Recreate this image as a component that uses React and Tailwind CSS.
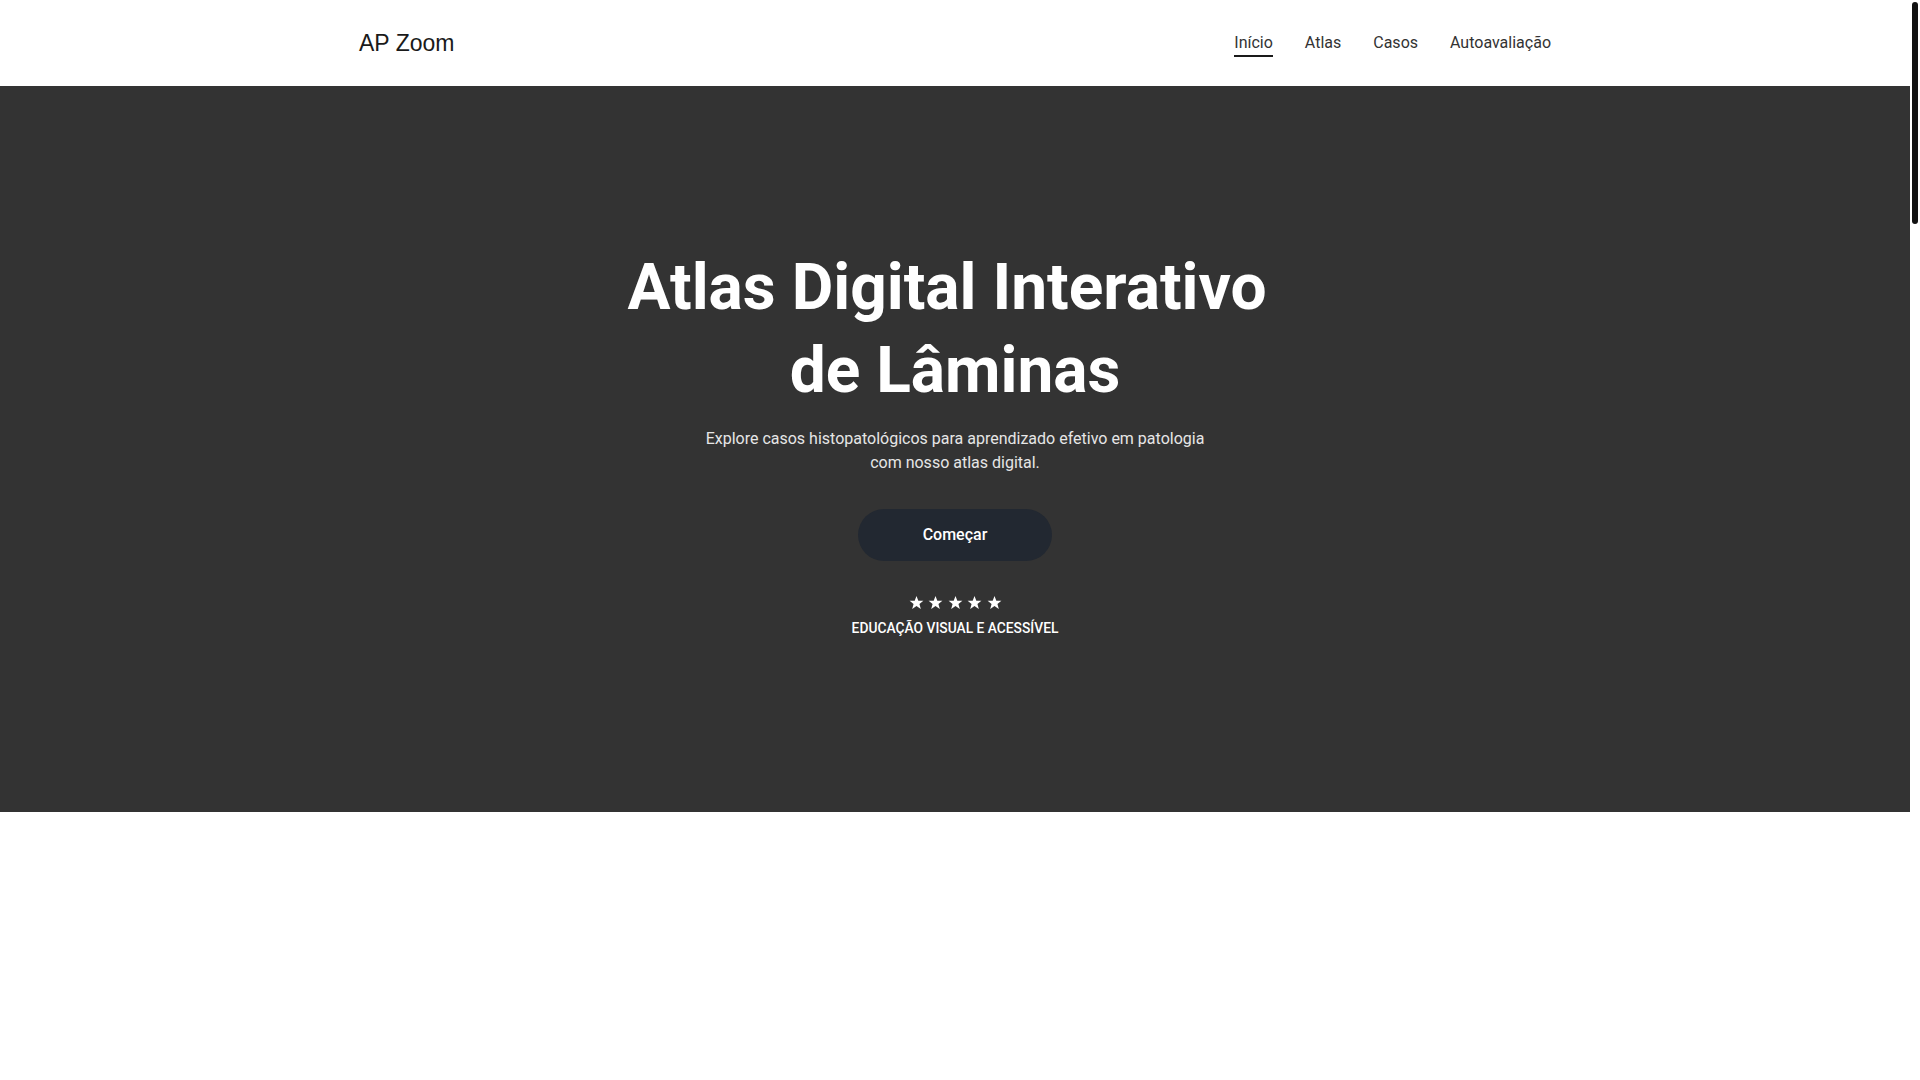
const links = [
  { label: "Início", active: true },
  { label: "Atlas" },
  { label: "Casos" },
  { label: "Autoavaliação" },
];

function Stars() {
  return (
    <div className="flex items-center justify-center gap-[4.5px]">
      {[0, 1, 2, 3, 4].map((i) => (
        <svg key={i} width="15" height="15" viewBox="0 0 24 24" className="fill-white">
          <polygon points="12,1.5 14.9,9 23,9.3 16.7,14.3 18.9,22.2 12,17.6 5.1,22.2 7.3,14.3 1,9.3 9.1,9" />
        </svg>
      ))}
    </div>
  );
}

export default function App() {
  return (
    <div className="min-h-screen flex bg-white font-['Roboto',sans-serif]">
      <div className="flex-1 min-w-0">
        {/* header */}
        <header className="h-[86px] bg-white">
          <div className="max-w-[1192px] mx-auto h-full flex items-center justify-between">
            <a className="text-[23px] leading-8 text-[#1a1a1a] font-['Liberation_Sans',Arial,sans-serif]">
              AP Zoom
            </a>
            <nav className="flex items-center gap-8 pt-[2px]">
              {links.map((l) => (
                <a
                  key={l.label}
                  className={
                    "text-base leading-6 text-[#333] border-b-2 " +
                    (l.active ? "border-[#1a1a1a]" : "border-transparent")
                  }
                >
                  {l.label}
                </a>
              ))}
            </nav>
          </div>
        </header>

        {/* hero */}
        <section className="bg-[#333333] pt-[160px] pb-[174px] text-center">
          <h1 className="max-w-2xl mx-auto text-[64px] leading-[1.3] font-bold text-white whitespace-break-spaces">
            Atlas Digital Interativo de Lâminas
          </h1>
          <p className="mt-[15px] max-w-lg mx-auto text-base leading-6 text-[#e6e6e6]">
            Explore casos histopatológicos para aprendizado efetivo em patologia com nosso atlas digital.
          </p>
          <button className="mt-[34px] h-[52px] w-[194px] rounded-full bg-[#222831] text-white text-base font-medium">
            Começar
          </button>
          <div className="mt-[34px]">
            <Stars />
          </div>
          <p className="mt-2 text-[13.8px] leading-5 font-medium uppercase text-white">
            Educação visual e acessível
          </p>
        </section>
      </div>

      {/* page scrollbar */}
      <aside className="w-[10px] shrink-0 bg-white">
        <div className="sticky top-0 pt-[2px] px-[2px]">
          <div className="h-[222px] rounded-full bg-[#111]"></div>
        </div>
      </aside>
    </div>
  );
}
